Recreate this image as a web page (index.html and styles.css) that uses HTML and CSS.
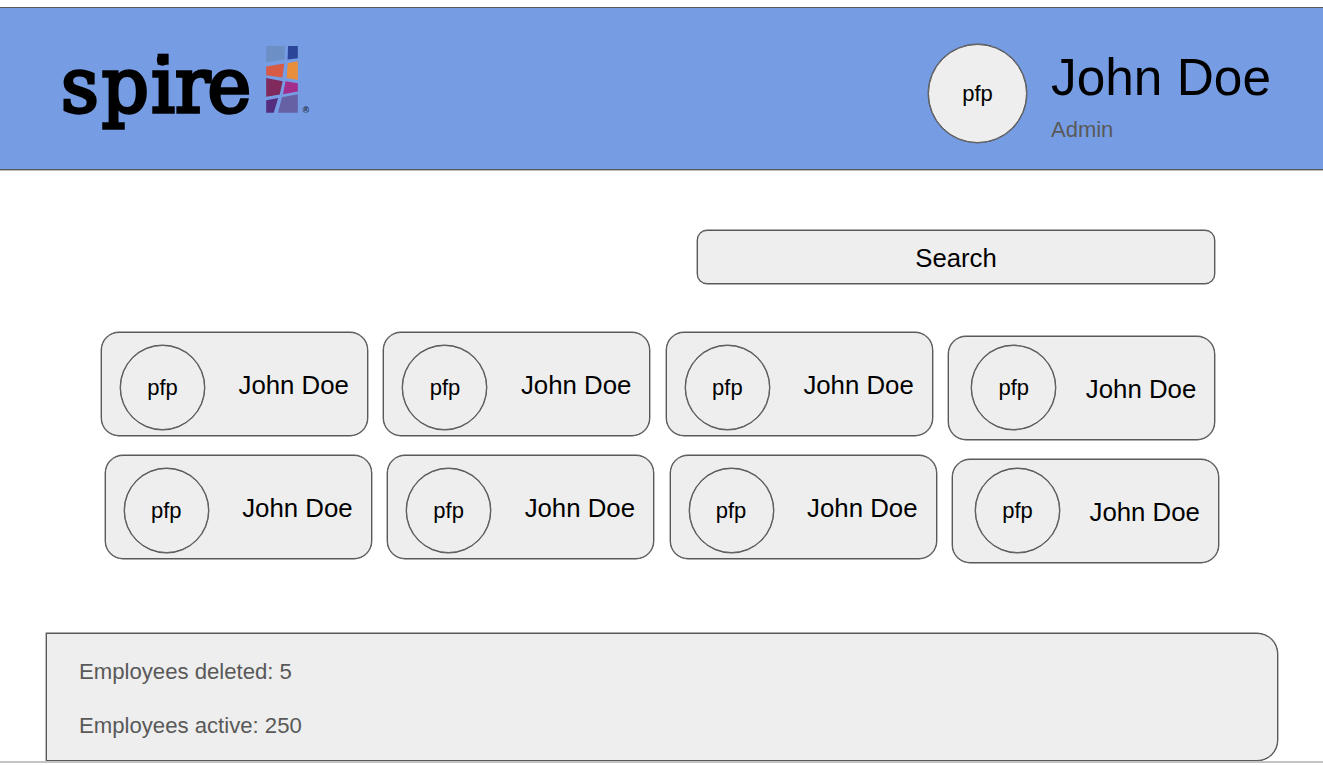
FILE: index.html
```html
<!DOCTYPE html>
<html lang="en">
<head>
<meta charset="utf-8">
<title>Spire Employees</title>
<link rel="stylesheet" href="styles.css">
</head>
<body>
<header class="header">
  <svg class="logo" width="252" height="92" viewBox="0 0 252 92" role="img" aria-label="spire">
    <text class="wordmark" transform="translate(0 71.5) scale(.97 1)" x="0 42 93 117.5 151" y="0">spire</text>
    <path d="M96.6 13.7h11v11h-11z"/>
    <path fill="#6c8fc5" d="M205.2 6h18.6v13.2l-18.6 3z"/>
    <path fill="#2b4599" d="M227 6h9.8v12.2l-10.2 1.4z"/>
    <path fill="#d75a45" d="M205.2 26.5l18-3-1.8 14-16.2-2.2z"/>
    <path fill="#e98f3c" d="M226.8 23l10-1.8v18.9l-11.2-2.2z"/>
    <path fill="#80295d" d="M205.2 38l16.5 3.3-3 13.2-13.5 2.2z"/>
    <path fill="#a32d8b" d="M224.5 41.2l12.3 2v8.4l-14.8 2.6z"/>
    <path fill="#552d7e" d="M205.2 60.2l12-2.2-4.5 14.8h-7.5z"/>
    <path fill="#6661a5" d="M221 57.3l15.8-3v18.5h-19.8z"/>
    <text class="registered" x="241.5" y="72.5">®</text>
  </svg>
  <div class="account">
    <div class="avatar avatar-large">pfp</div>
    <div class="identity">
      <div class="account-name">John Doe</div>
      <div class="role">Admin</div>
    </div>
  </div>
</header>
<main class="main">
  <div class="search">Search</div>
  <div class="employees">
    <div class="row">
      <div class="card"><div class="avatar">pfp</div><span class="name">John Doe</span></div>
      <div class="card"><div class="avatar">pfp</div><span class="name">John Doe</span></div>
      <div class="card"><div class="avatar">pfp</div><span class="name">John Doe</span></div>
      <div class="card card-last"><div class="avatar">pfp</div><span class="name">John Doe</span></div>
    </div>
    <div class="row row-second">
      <div class="card"><div class="avatar">pfp</div><span class="name">John Doe</span></div>
      <div class="card"><div class="avatar">pfp</div><span class="name">John Doe</span></div>
      <div class="card"><div class="avatar">pfp</div><span class="name">John Doe</span></div>
      <div class="card card-last"><div class="avatar">pfp</div><span class="name">John Doe</span></div>
    </div>
  </div>
  <section class="stats">
    <p class="stat">Employees deleted: 5</p>
    <p class="stat">Employees active: 250</p>
  </section>
</main>
<footer class="edge"></footer>
</body>
</html>
```
FILE: styles.css
```css
* { box-sizing: border-box; }
body {
  margin: 0;
  padding-top: 7px;
  height: 765px;
  overflow: hidden;
  background: #fff;
  font-family: "Liberation Sans", Arial, sans-serif;
  color: #000;
}
.header {
  display: flex;
  justify-content: space-between;
  height: 163px;
  padding: 0 52px 0 61px;
  background: #769de4;
  border-top: 1px solid #595959;
  border-bottom: 1px solid #595959;
  box-shadow: 0 0.4px 0 #595959;
}
.logo { margin-top: 32px; overflow: visible; }
.wordmark {
  font-family: "DejaVu Serif", serif;
  font-size: 76px;
  stroke: #000;
  stroke-width: 3.4px;
  stroke-linejoin: miter;
}
.registered { font-size: 9px; font-weight: bold; fill: #1c2940; }
.account { display: flex; gap: 24px; padding-top: 35px; }
.avatar {
  display: flex;
  flex: none;
  align-items: center;
  justify-content: center;
  width: 85px;
  height: 85px;
  padding-top: 0.6px;
  border: 1px solid #595959;
  border-radius: 50%;
  box-shadow: 0 0 0 0.4px #595959;
  background: #eee;
  font-size: 22px;
}
.avatar-large { width: 99px; height: 99px; padding-top: 1px; margin: 0.5px 0 0; }
.identity { padding-top: 4px; }
.account-name { font-size: 51.4px; line-height: 60px; }
.role { margin-top: 10px; font-size: 22px; line-height: 26px; color: #595959; }
.search {
  width: 518px;
  height: 54px;
  margin: 60.2px 0 0 697px;
  border: 1px solid #595959;
  border-radius: 10px;
  box-shadow: 0 0 0 0.4px #595959;
  background: #eee;
  font-size: 25.7px;
  line-height: 54px;
  text-align: center;
}
.employees { padding: 47.8px 0 0 101px; }
.row { display: flex; gap: 15.45px; height: 104px; }
.row-second { margin: 19.4px 0 0 3.7px; }
.card {
  display: flex;
  align-items: flex-start;
  flex: none;
  width: 267px;
  height: 104px;
  padding: 12px 0 0 18px;
  border: 1px solid #595959;
  border-radius: 18px;
  box-shadow: 0 0 0 0.4px #595959;
  background: #eee;
}
.card-last { margin-top: 4px; padding: 8px 0 0 22px; }
.name { margin: 25px 0 0 33.5px; font-size: 25.8px; line-height: 30px; white-space: nowrap; }
.card-last .name { margin: 29px 0 0 29.5px; }
.stats {
  width: 1232px;
  height: 128px;
  margin: 73.6px 0 0 46px;
  padding: 25px 0 0 32px;
  border: 1px solid #595959;
  border-radius: 0 21px 21px 0;
  box-shadow: 0 0 0 0.4px #595959;
  background: #eee;
  color: #595959;
}
.stat { margin: 0 0 28px; font-size: 22.15px; line-height: 26px; }
.edge { height: 2px; background: #c4c4c4; }
```
